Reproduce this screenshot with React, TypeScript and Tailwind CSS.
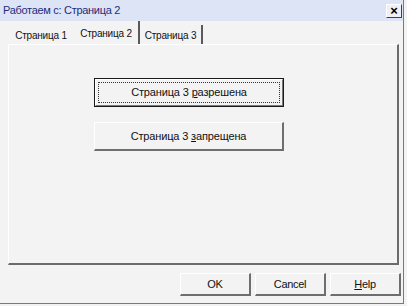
import React from 'react'

function ClassicButton({
  children,
  className = '',
  isDefault = false,
}: {
  children: React.ReactNode
  className?: string
  isDefault?: boolean
}) {
  if (isDefault) {
    return (
      <div className={`border border-[#1a1a1a] bg-[#f3f3f3] ${className}`}>
        <div className="h-full border-t border-l border-white border-r border-b border-r-[#7a7a7a] border-b-[#7a7a7a] p-[2px]">
          <div className="h-full flex items-center justify-center border border-dotted border-[#333]">
            {children}
          </div>
        </div>
      </div>
    )
  }
  return (
    <div
      className={`flex items-center justify-center bg-[#f3f3f3] border-t border-l border-white border-r-2 border-b-2 border-r-[#6e6e6e] border-b-[#6e6e6e] ${className}`}
    >
      {children}
    </div>
  )
}

export default function App() {
  return (
    <div className="w-[407px] h-[306px] bg-[#f3f3f3] overflow-hidden font-['Liberation_Sans',Arial,sans-serif] text-[11px] text-[#111]">
      <div className="w-[404px] h-[304px] flex flex-col border-r border-b border-[#7a7a7a]">
        {/* Title bar */}
        <div className="h-[21px] flex items-center justify-between pl-[3px] pr-[1px] bg-[#dde4f5]">
          <span className="text-[#1f2d7a] tracking-[-0.3px]">Работаем с: Страница 2</span>
          <div className="w-[16px] h-[14px] flex items-center justify-center bg-[#eef0f6] border-t border-l border-white border-r border-b border-r-[#404040] border-b-[#404040] text-[13px] font-bold leading-none text-black">
            ×
          </div>
        </div>

        {/* Tabs */}
        <div className="h-[23px] flex items-end pl-[8px] text-[10px] tracking-[-0.2px]">
          <div className="h-[20px] w-[66px] flex items-center justify-center pt-[3px]">Страница 1</div>
          <div className="h-[23px] w-[66px] flex items-start justify-center pt-[5px] border-r-2 border-r-[#5a5a5a]">
            Страница 2
          </div>
          <div className="h-[19px] w-[63px] flex items-center justify-center pt-[2px] border-r-2 border-r-[#5a5a5a]">
            Страница 3
          </div>
        </div>

        {/* Panel */}
        <div className="ml-[8px] w-[391px] h-[221px] border-t border-l border-white border-r-2 border-b-2 border-r-[#6b6b6b] border-b-[#6b6b6b] pt-[33px] pl-[85px] tracking-[-0.15px]">
          <ClassicButton isDefault className="w-[190px] h-[29px]">
            <span>
              Страница 3 <span className="underline">р</span>азрешена
            </span>
          </ClassicButton>
          <ClassicButton className="w-[190px] h-[29px] mt-[15px]">
            <span>
              Страница 3 <span className="underline">з</span>апрещена
            </span>
          </ClassicButton>
        </div>

        {/* Footer */}
        <div className="flex justify-end gap-[4px] pr-[2px] pt-[8px] tracking-[-0.3px]">
          <ClassicButton className="w-[71px] h-[23px]">OK</ClassicButton>
          <ClassicButton className="w-[71px] h-[23px]">Cancel</ClassicButton>
          <ClassicButton className="w-[71px] h-[23px]">
            <span>
              <span className="underline">H</span>elp
            </span>
          </ClassicButton>
        </div>
      </div>
    </div>
  )
}
